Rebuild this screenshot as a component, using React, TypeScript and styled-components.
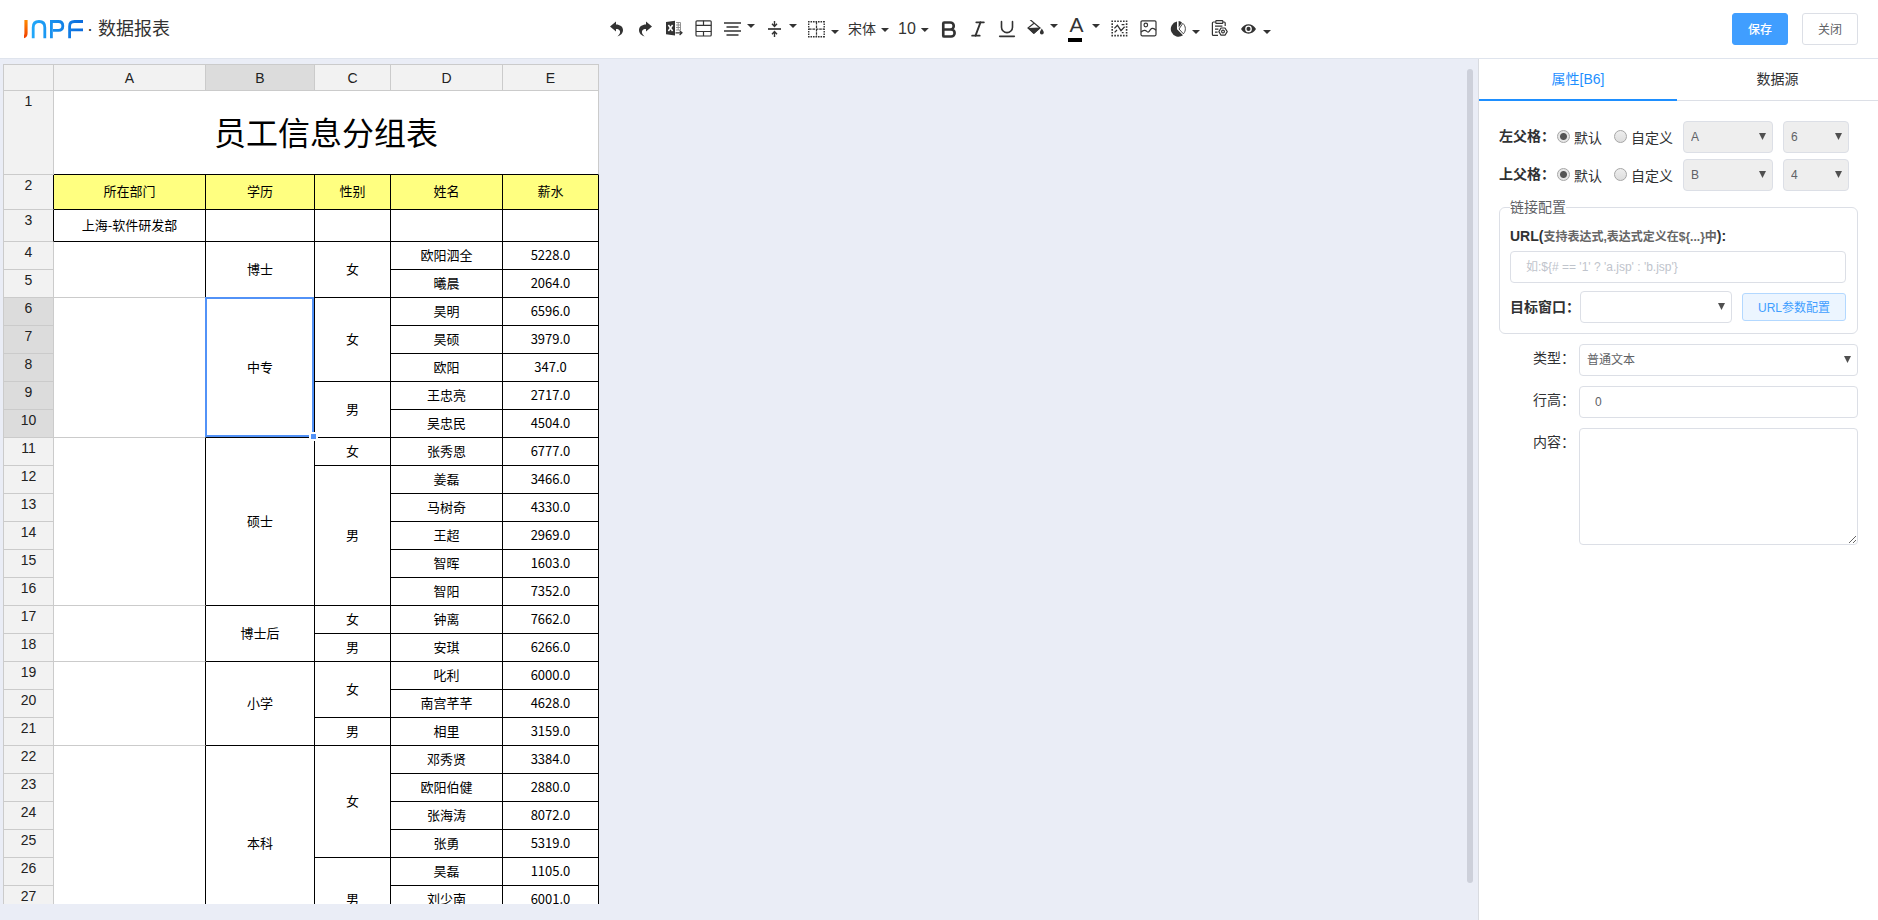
import React from "react";
import styled, { createGlobalStyle, css } from "styled-components";
import { Bold, Italic, Underline } from "lucide-react";

const sans = `"Liberation Sans", "Noto Sans CJK SC", sans-serif`;
const cjk = `"Noto Sans CJK SC", "Liberation Sans", sans-serif`;

const GlobalStyle = createGlobalStyle`
  *, *::before, *::after { box-sizing: border-box; }
  body { margin: 0; font-family: ${sans}; font-size: 14px; color: #303133; background: #fff; }
  button, input, select, textarea { font-family: inherit; margin: 0; }
`;

const Page = styled.div`
  display: flex;
  flex-direction: column;
  height: 100vh;
`;

/* ---------- header ---------- */

const Header = styled.header`
  display: grid;
  grid-template-columns: 1fr auto 1fr;
  align-items: center;
  height: 59px;
  flex: none;
  border-bottom: 1px solid #dfe4ed;
  background: #fff;
`;

const Brand = styled.h1`
  display: flex;
  align-items: center;
  gap: 3px;
  margin: 0;
  padding-left: 23px;
  font-size: 18px;
  font-weight: 400;
  line-height: 24px;
  color: #333;
`;

const Toolbar = styled.div`
  display: flex;
  height: 58px;
`;

const ToolButton = styled.button<{ $width?: number }>`
  display: flex;
  align-items: center;
  width: ${(p) => p.$width ?? 29}px;
  height: 58px;
  padding: 0;
  border: 0;
  background: none;
  color: #333;
  cursor: pointer;
`;

const Glyph = styled.span`
  display: flex;
  justify-content: center;
  width: 29px;
  flex: none;
`;

const ToolText = styled.span<{ $size: number }>`
  padding: 0 5px 0 4px;
  font-size: ${(p) => p.$size}px;
  line-height: 20px;
`;

const Caret = styled.span<{ $at?: "high" | "middle" | "low" }>`
  width: 8px;
  height: 4px;
  flex: none;
  background: #333;
  clip-path: polygon(0 0, 100% 0, 50% 100%);
  margin-bottom: ${(p) => (p.$at === "high" ? 6 : 0)}px;
  margin-top: ${(p) => (p.$at === "low" ? 6 : p.$at === "high" ? 0 : 2)}px;
`;

const ColorLetter = styled.span`
  width: 14px;
  margin-right: 6px;
  border-bottom: 4px solid #000;
  padding-bottom: 4px;
  font-size: 21px;
  line-height: 18px;
  text-indent: 2px;
  white-space: nowrap;
`;

const Actions = styled.div`
  display: flex;
  justify-content: flex-end;
  gap: 14px;
  padding-right: 20px;
`;

const ActionButton = styled.button<{ $primary?: boolean }>`
  width: 56px;
  height: 32px;
  padding: 0 0 2px;
  border: 1px solid ${(p) => (p.$primary ? "#409eff" : "#dcdfe6")};
  border-radius: 3px;
  background: ${(p) => (p.$primary ? "#409eff" : "#fff")};
  color: ${(p) => (p.$primary ? "#fff" : "#606266")};
  font-size: 12px;
  font-weight: ${(p) => (p.$primary ? 500 : 400)};
  cursor: pointer;
`;

/* ---------- workspace ---------- */

const Body = styled.div`
  display: flex;
  flex: 1;
  min-height: 0;
`;

const Workspace = styled.main`
  display: flex;
  flex: 1;
  min-width: 0;
  background: #eaedf6;
`;

const SheetView = styled.div`
  flex: 1;
  min-width: 0;
  margin: 5px 0 16px 3px;
  overflow: hidden;
`;

const ScrollThumb = styled.div`
  width: 6px;
  margin: 10px 5px 37px 0;
  border-radius: 3px;
  background: #cdd0da;
`;

const Sheet = styled.table`
  width: 596px;
  table-layout: fixed;
  border-collapse: separate;
  border-spacing: 0;
  background: #fff;
`;

const GRID = "#cbcbcb";

const HeadCell = styled.th<{ $selected?: boolean; $corner?: boolean }>`
  height: 27px;
  padding: 0;
  border: 1px solid ${GRID};
  border-left-width: ${(p) => (p.$corner ? 1 : 0)}px;
  background: ${(p) => (p.$selected ? "#dcdcdc" : "#f2f2f2")};
  font-size: 14px;
  font-weight: 400;
  line-height: 20px;
  color: #222;
`;

const RowHead = styled.th<{ $selected?: boolean; $dark?: boolean; $height: number }>`
  height: ${(p) => p.$height}px;
  padding: 0;
  border: 1px solid ${GRID};
  border-top: 0;
  ${(p) => p.$dark && css`border-right-color: #000;`}
  background: ${(p) => (p.$selected ? "#dcdcdc" : "#f2f2f2")};
  vertical-align: top;
  font-size: 14px;
  font-weight: 400;
  line-height: 21px;
  color: #222;
`;

const Cell = styled.td<{ $group?: boolean; $fill?: boolean; $title?: boolean }>`
  position: relative;
  padding: 0 0 ${(p) => (p.$title ? 4 : 2)}px;
  border: solid #000;
  border-width: 0 1px 1px 0;
  ${(p) => p.$group && css`border-bottom-color: ${GRID};`}
  ${(p) => p.$title && css`border-right-color: ${GRID};`}
  background: ${(p) => (p.$fill ? "#ffff80" : "#fff")};
  background-clip: padding-box;
  font-family: ${cjk};
  font-size: ${(p) => (p.$title ? 32 : 13)}px;
  line-height: ${(p) => (p.$title ? 48 : 20)}px;
  text-align: center;
  color: #000;
`;

const Selection = styled.div`
  position: absolute;
  inset: -1px 0 0 -1px;
  z-index: 1;
  border: 2px solid #5292f7;
  &::after {
    content: "";
    position: absolute;
    right: -6px;
    bottom: -6px;
    width: 9px;
    height: 9px;
    border: 2px solid #fff;
    background: #5292f7;
  }
`;

/* ---------- property panel ---------- */

const Panel = styled.aside`
  width: 400px;
  flex: none;
  border-left: 1px solid #d9dbe0;
  background: #fff;
`;

const Tabs = styled.div`
  display: grid;
  grid-template-columns: 198px 1fr;
  height: 42px;
`;

const Tab = styled.button<{ $active?: boolean }>`
  padding: 0 0 ${(p) => (p.$active ? 2 : 3)}px;
  border: 0;
  border-bottom: ${(p) => (p.$active ? "2px solid #1e8fff" : "1px solid #dcdfe6")};
  background: none;
  font-size: 14px;
  color: ${(p) => (p.$active ? "#1e8fff" : "#303133")};
  cursor: pointer;
`;

const Form = styled.form`
  display: flex;
  flex-direction: column;
  padding: 20px 20px 0;
`;

const ParentRow = styled.div`
  display: flex;
  align-items: center;
  height: 32px;
  margin-bottom: 6px;
`;

const RowTitle = styled.span`
  width: 58px;
  padding-bottom: 2px;
  font-weight: 700;
  line-height: 20px;
`;

const RadioLabel = styled.label<{ $wide?: boolean }>`
  display: flex;
  align-items: center;
  gap: 4px;
  width: ${(p) => (p.$wide ? 69 : 57)}px;
  padding-bottom: 2px;
  line-height: 20px;
  white-space: nowrap;
`;

const RadioText = styled.span`
  padding-top: 3px;
`;

const Radio = styled.input`
  appearance: none;
  width: 13px;
  height: 13px;
  flex: none;
  border: 1px solid #a6a6a6;
  border-radius: 50%;
  background: linear-gradient(#eee, #ddd);
  &:checked {
    background: radial-gradient(circle, #555 0 3px, #e6e6e6 4px);
  }
`;

const SelectBox = styled.span<{ $width?: number }>`
  position: relative;
  display: block;
  width: ${(p) => (p.$width ? `${p.$width}px` : "100%")};
  flex: ${(p) => (p.$width ? "none" : "1")};
  &::after {
    content: "";
    position: absolute;
    top: 12px;
    right: 7px;
    width: 7px;
    height: 7px;
    background: #505050;
    clip-path: polygon(0 0, 100% 0, 50% 100%);
    pointer-events: none;
  }
  & + & {
    margin-left: 10px;
  }
`;

const Select = styled.select`
  appearance: none;
  display: block;
  width: 100%;
  height: 32px;
  padding: 0 20px 0 7px;
  border: 1px solid #dcdfe6;
  border-radius: 4px;
  background: #fff;
  font-size: 12px;
  color: #606266;
  &:disabled {
    background: #eee;
    opacity: 1;
  }
`;

const LinkGroup = styled.fieldset`
  display: flex;
  flex-direction: column;
  min-width: 0;
  margin: 0 0 10px;
  padding: 9px 11px 10px 10px;
  border: 1px solid #dcdfe6;
  border-radius: 6px;
`;

const Legend = styled.legend`
  padding: 0;
  line-height: 20px;
  color: #606266;
`;

const UrlLabel = styled.label`
  font-weight: 700;
  line-height: 20px;
  margin-bottom: 4px;
  small {
    font-size: 12px;
    color: #666;
  }
`;

const TextInput = styled.input`
  width: 100%;
  height: 32px;
  padding: 0 15px;
  border: 1px solid #dcdfe6;
  border-radius: 4px;
  font-size: 12px;
  color: #606266;
  &::placeholder {
    color: #c0c4cc;
  }
`;

const TargetRow = styled.div`
  display: flex;
  align-items: center;
  margin-top: 8px;
  label {
    width: 70px;
    padding-bottom: 3px;
    font-weight: 700;
  }
`;

const ParamButton = styled.button`
  width: 104px;
  height: 28px;
  margin-left: 10px;
  padding: 0 0 2px;
  border: 1px solid #b3d8ff;
  border-radius: 3px;
  background: #ecf5ff;
  font-size: 12px;
  color: #409eff;
  cursor: pointer;
`;

const Field = styled.div`
  display: grid;
  grid-template-columns: 76px 1fr;
  column-gap: 4px;
  margin-bottom: 10px;
  label {
    text-align: right;
    line-height: 29px;
  }
`;

const TextArea = styled.textarea`
  display: block;
  width: 100%;
  height: 117px;
  padding: 5px 15px;
  border: 1px solid #dcdfe6;
  border-radius: 4px;
  font-size: 12px;
  resize: vertical;
`;

/* ---------- icons ---------- */

const Icon = ({ children }: { children: React.ReactNode }) => (
  <svg width="17" height="18" viewBox="0 0 17 18" fill="none" stroke="#333" strokeWidth="1.2" aria-hidden="true">
    {children}
  </svg>
);

const undoPath =
  "M2 6.6 8 1.6V4.4C12 4.4 15 6.6 15 10.1C15 13.5 12.6 15.6 9.4 16.4C11.6 14.6 12.4 13 12 11.3C11.6 9.5 10 9 8 9V11.6Z";

const icons = {
  undo: <Icon><path d={undoPath} fill="#333" stroke="none" /></Icon>,
  redo: <Icon><path d={undoPath} fill="#333" stroke="none" transform="matrix(-1 0 0 1 17 0)" /></Icon>,
  excel: (
    <Icon>
      <path d="M0 2 9 .8V15.6L0 14.2Z" fill="#333" stroke="none" />
      <path d="M2.4 5 6.6 11M6.6 5 2.4 11" stroke="#fff" strokeWidth="1.5" />
      <path d="M10 2.5H14.5V10H10M10 5H14.5M10 7.5H14.5M12.2 2.5V10" stroke="#888" strokeWidth=".9" />
      <path d="M9.5 12.8H16M13.6 10.6 16 12.8 13.6 15" />
    </Icon>
  ),
  merge: (
    <Icon>
      <rect x="1" y=".8" width="15.2" height="15.2" rx="1" />
      <path d="M1 5.3H16.2M1 11.5H16.2M8.5 .8V5.3M8.5 11.5V16" />
    </Icon>
  ),
  align: (
    <Icon>
      <path d="M0 3H17M2.5 7H14.5M0 11H17M2.5 15H14.5" strokeWidth="1.7" />
    </Icon>
  ),
  valign: (
    <Icon>
      <path d="M2 9H15" strokeWidth="1.7" />
      <path d="M8.5 1V6M6 3.8 8.5 6.4 11 3.8M8.5 17V12M6 14.2 8.5 11.6 11 14.2" strokeWidth="1.4" />
    </Icon>
  ),
  border: (
    <Icon>
      <path d="M0 1.7H17M0 16.7H17M.7 1V17.4M16.2 1V17.4" strokeWidth="1.4" strokeDasharray="1.6 .9" />
      <path d="M1 9.2H16M8.5 2V16.5" strokeWidth="1.2" strokeDasharray="2.6 .8" />
    </Icon>
  ),
  bucket: (
    <Icon>
      <path d="M2.6 -1.4 13 7.4 6.8 12.6 1 7.4 7 2.6" strokeWidth="1.2" transform="translate(0 .6)" />
      <path d="M1 8 13.4 7.6 7.6 13.4H6.2Z" fill="#333" stroke="none" />
      <path d="M14.8 8.4C15.8 10.2 16.8 11.4 16.8 12.6A1.9 1.9 0 0 1 12.9 12.6C12.9 11.4 13.9 10.2 14.8 8.4Z" fill="#333" stroke="none" />
    </Icon>
  ),
  select: (
    <Icon>
      <path d="M.4 1.2H16.4M.4 15.6H16.4M1.2 .4V16.4M15.6 .4V16.4" strokeWidth="1.6" strokeDasharray="1.6 1.3" />
      <path d="M3.4 8.4 6.4 5.2 10 10.6 13.6 6.8M3.6 12.4 6 10M10.6 4.6H13.4M12.6 12.6H10.8" strokeWidth="1.3" />
    </Icon>
  ),
  image: (
    <Icon>
      <rect x="1" y=".8" width="15" height="15" rx="1.2" />
      <circle cx="5.8" cy="5" r="1.8" />
      <path d="M1 12.2C3.2 9.8 5.2 9.8 7.2 11.6C8.6 12.8 9.2 11.4 10.6 9.4C11.8 7.8 13.6 8 16 10.2" />
    </Icon>
  ),
  pie: (
    <Icon>
      <path d="M8 1.4A7.7 7.7 0 1 0 14 15.2L8 9.2Z" fill="#333" stroke="none" />
      <path d="M9.6 1V7.6L13 2.8C12 1.7 11 1.1 9.6 1Z" fill="#333" stroke="none" />
      <path d="M13.8 3.4 10 9 14.4 13.8C17.2 10.8 17 6 13.8 3.4Z" strokeWidth=".9" />
    </Icon>
  ),
  clipboard: (
    <Icon>
      <path d="M4.6 2H2.4Q1.4 2 1.4 3V14.4Q1.4 15.4 2.4 15.4H7M12 2H13.2Q14.2 2 14.2 3V6" />
      <rect x="4.8" y=".7" width="7" height="2.6" rx=".6" />
      <path d="M4 6.2H11.4M4 9.2H7.4M4 12.2H6.6" />
      <path d="M10 8H14L16.2 11.6 14 15.2H10L7.9 11.6Z" strokeLinejoin="round" />
      <circle cx="12" cy="11.6" r="1.4" />
    </Icon>
  ),
  eye: (
    <Icon>
      <path d="M1 9C4.4 2.6 12.6 2.6 16 9C12.6 15.2 4.4 15.2 1 9Z" fill="#333" stroke="none" />
      <circle cx="8.5" cy="8.9" r="2.7" fill="#333" stroke="#fff" strokeWidth="1.3" />
    </Icon>
  ),
};

const Logo = () => (
  <svg width="61" height="20" viewBox="0 0 61 20" fill="none" strokeWidth="2.8" role="img" aria-label="JNPF">
    <defs>
      <linearGradient id="warm" x1="0" y1="0" x2="0" y2="1">
        <stop offset="0" stopColor="#ff8a00" />
        <stop offset="1" stopColor="#f03c00" />
      </linearGradient>
      <linearGradient id="cool" gradientUnits="userSpaceOnUse" x1="8" y1="0" x2="60" y2="0">
        <stop offset="0" stopColor="#22a9fa" />
        <stop offset="1" stopColor="#0b6bdc" />
      </linearGradient>
    </defs>
    <path d="M1.4 1H4.6V14Q4.6 18.2 1 19.2V16.2Q1.4 15.6 1.4 14Z" fill="url(#warm)" />
    <path d="M10.2 19.2V8.4Q10.2 2.5 16 2.5Q21.8 2.5 21.8 8.4V19.2" stroke="url(#cool)" />
    <path d="M28.4 19.2V2.5H35.4Q39.8 2.5 39.8 7Q39.8 11.4 35.4 11.4H30" stroke="url(#cool)" />
    <path d="M46.6 19.2V7.4Q46.6 2.5 51.4 2.5H60M47 10.8H60" stroke="url(#cool)" />
  </svg>
);

/* ---------- data ---------- */

type Entry = { text: string; span?: number; group?: boolean; selected?: boolean };

const group = (span: number): Entry => ({ text: "", span, group: true });
const c = (text: string, span = 1): Entry => ({ text, span });

const records: Entry[][] = [
  [group(2), c("博士", 2), c("女", 2), c("欧阳泗全"), c("5228.0")],
  [c("曦晨"), c("2064.0")],
  [group(5), { text: "中专", span: 5, selected: true }, c("女", 3), c("昊明"), c("6596.0")],
  [c("昊硕"), c("3979.0")],
  [c("欧阳"), c("347.0")],
  [c("男", 2), c("王忠亮"), c("2717.0")],
  [c("吴忠民"), c("4504.0")],
  [group(6), c("硕士", 6), c("女"), c("张秀恩"), c("6777.0")],
  [c("男", 5), c("姜磊"), c("3466.0")],
  [c("马树奇"), c("4330.0")],
  [c("王超"), c("2969.0")],
  [c("智晖"), c("1603.0")],
  [c("智阳"), c("7352.0")],
  [group(2), c("博士后", 2), c("女"), c("钟离"), c("7662.0")],
  [c("男"), c("安琪"), c("6266.0")],
  [group(3), c("小学", 3), c("女", 2), c("叱利"), c("6000.0")],
  [c("南宫芊芊"), c("4628.0")],
  [c("男"), c("相里"), c("3159.0")],
  [group(7), c("本科", 7), c("女", 4), c("邓秀贤"), c("3384.0")],
  [c("欧阳伯健"), c("2880.0")],
  [c("张海涛"), c("8072.0")],
  [c("张勇"), c("5319.0")],
  [c("男", 3), c("昊磊"), c("1105.0")],
  [c("刘少南"), c("6001.0")],
  [c(""), c("")],
];

const Dropdown = ({ label, at, children }: { label: string; at: "high" | "low"; children: React.ReactNode }) => (
  <ToolButton type="button" aria-label={label} $width={42}>
    <Glyph>{children}</Glyph>
    <Caret $at={at} />
  </ToolButton>
);

const Tool = ({ label, children }: { label: string; children: React.ReactNode }) => (
  <ToolButton type="button" aria-label={label}>
    <Glyph>{children}</Glyph>
  </ToolButton>
);

const ParentCell = ({ title, name, column, row }: { title: string; name: string; column: string; row: string }) => (
  <ParentRow role="radiogroup" aria-label={title}>
    <RowTitle>{title}：</RowTitle>
    <RadioLabel>
      <Radio type="radio" name={name} defaultChecked />
      <RadioText>默认</RadioText>
    </RadioLabel>
    <RadioLabel $wide>
      <Radio type="radio" name={name} />
      <RadioText>自定义</RadioText>
    </RadioLabel>
    <SelectBox $width={90}>
      <Select disabled aria-label={`${title} 列`}><option>{column}</option></Select>
    </SelectBox>
    <SelectBox $width={66}>
      <Select disabled aria-label={`${title} 行`}><option>{row}</option></Select>
    </SelectBox>
  </ParentRow>
);

export default function App() {
  return (
    <Page>
      <GlobalStyle />
      <Header>
        <Brand>
          <Logo />
          <span>· 数据报表</span>
        </Brand>
        <Toolbar role="toolbar">
          <Tool label="撤销">{icons.undo}</Tool>
          <Tool label="重做">{icons.redo}</Tool>
          <Tool label="导入Excel">{icons.excel}</Tool>
          <Tool label="合并单元格">{icons.merge}</Tool>
          <Dropdown label="水平对齐" at="high">{icons.align}</Dropdown>
          <Dropdown label="垂直对齐" at="high">{icons.valign}</Dropdown>
          <Dropdown label="边框" at="low">{icons.border}</Dropdown>
          <ToolButton type="button" $width={50}>
            <ToolText $size={14}>宋体</ToolText>
            <Caret />
          </ToolButton>
          <ToolButton type="button" $width={40}>
            <ToolText $size={16}>10</ToolText>
            <Caret />
          </ToolButton>
          <Tool label="加粗"><Bold size={21} strokeWidth={3} /></Tool>
          <Tool label="斜体"><Italic size={20} strokeWidth={2.25} /></Tool>
          <Tool label="下划线"><Underline size={22} strokeWidth={1.75} /></Tool>
          <Dropdown label="背景色" at="high">{icons.bucket}</Dropdown>
          <Dropdown label="字体颜色" at="high"><ColorLetter>A</ColorLetter></Dropdown>
          <Tool label="选区">{icons.select}</Tool>
          <Tool label="图片">{icons.image}</Tool>
          <Dropdown label="图表" at="low">{icons.pie}</Dropdown>
          <Tool label="设置">{icons.clipboard}</Tool>
          <Dropdown label="预览" at="low">{icons.eye}</Dropdown>
        </Toolbar>
        <Actions>
          <ActionButton type="button" $primary>保存</ActionButton>
          <ActionButton type="button">关闭</ActionButton>
        </Actions>
      </Header>
      <Body>
        <Workspace>
          <SheetView>
            <Sheet>
              <colgroup>
                {[51, 152, 109, 76, 112, 96].map((w, i) => <col key={i} width={w} />)}
              </colgroup>
              <thead>
                <tr>
                  <HeadCell $corner />
                  {["A", "B", "C", "D", "E"].map((name) => (
                    <HeadCell key={name} scope="col" $selected={name === "B"}>{name}</HeadCell>
                  ))}
                </tr>
              </thead>
              <tbody>
                <tr>
                  <RowHead scope="row" $height={84}>1</RowHead>
                  <Cell colSpan={5} $title>员工信息分组表</Cell>
                </tr>
                <tr>
                  <RowHead scope="row" $height={35} $dark>2</RowHead>
                  {["所在部门", "学历", "性别", "姓名", "薪水"].map((name) => (
                    <Cell key={name} $fill>{name}</Cell>
                  ))}
                </tr>
                <tr>
                  <RowHead scope="row" $height={32} $dark>3</RowHead>
                  <Cell>上海-软件研发部</Cell>
                  <Cell /><Cell /><Cell /><Cell />
                </tr>
                {records.map((cells, i) => (
                  <tr key={i}>
                    <RowHead scope="row" $height={28} $selected={i >= 2 && i <= 6}>{i + 4}</RowHead>
                    {cells.map((cell, j) => (
                      <Cell key={j} rowSpan={cell.span} $group={cell.group}>
                        {cell.text}
                        {cell.selected && <Selection />}
                      </Cell>
                    ))}
                  </tr>
                ))}
              </tbody>
            </Sheet>
          </SheetView>
          <ScrollThumb />
        </Workspace>
        <Panel>
          <Tabs role="tablist">
            <Tab type="button" role="tab" aria-selected="true" $active>属性[B6]</Tab>
            <Tab type="button" role="tab" aria-selected="false">数据源</Tab>
          </Tabs>
          <Form>
            <ParentCell title="左父格" name="left" column="A" row="6" />
            <ParentCell title="上父格" name="top" column="B" row="4" />
            <LinkGroup>
              <Legend>链接配置</Legend>
              <UrlLabel htmlFor="url">
                URL(<small>支持表达式,表达式定义在${"{...}"}中</small>):
              </UrlLabel>
              <TextInput id="url" placeholder="如:${# == '1' ? 'a.jsp' : 'b.jsp'}" />
              <TargetRow>
                <label htmlFor="target">目标窗口：</label>
                <SelectBox>
                  <Select id="target"><option></option></Select>
                </SelectBox>
                <ParamButton type="button">URL参数配置</ParamButton>
              </TargetRow>
            </LinkGroup>
            <Field>
              <label htmlFor="type">类型：</label>
              <SelectBox>
                <Select id="type"><option>普通文本</option></Select>
              </SelectBox>
            </Field>
            <Field>
              <label htmlFor="height">行高：</label>
              <TextInput id="height" defaultValue="0" />
            </Field>
            <Field>
              <label htmlFor="content">内容：</label>
              <TextArea id="content" />
            </Field>
          </Form>
        </Panel>
      </Body>
    </Page>
  );
}
